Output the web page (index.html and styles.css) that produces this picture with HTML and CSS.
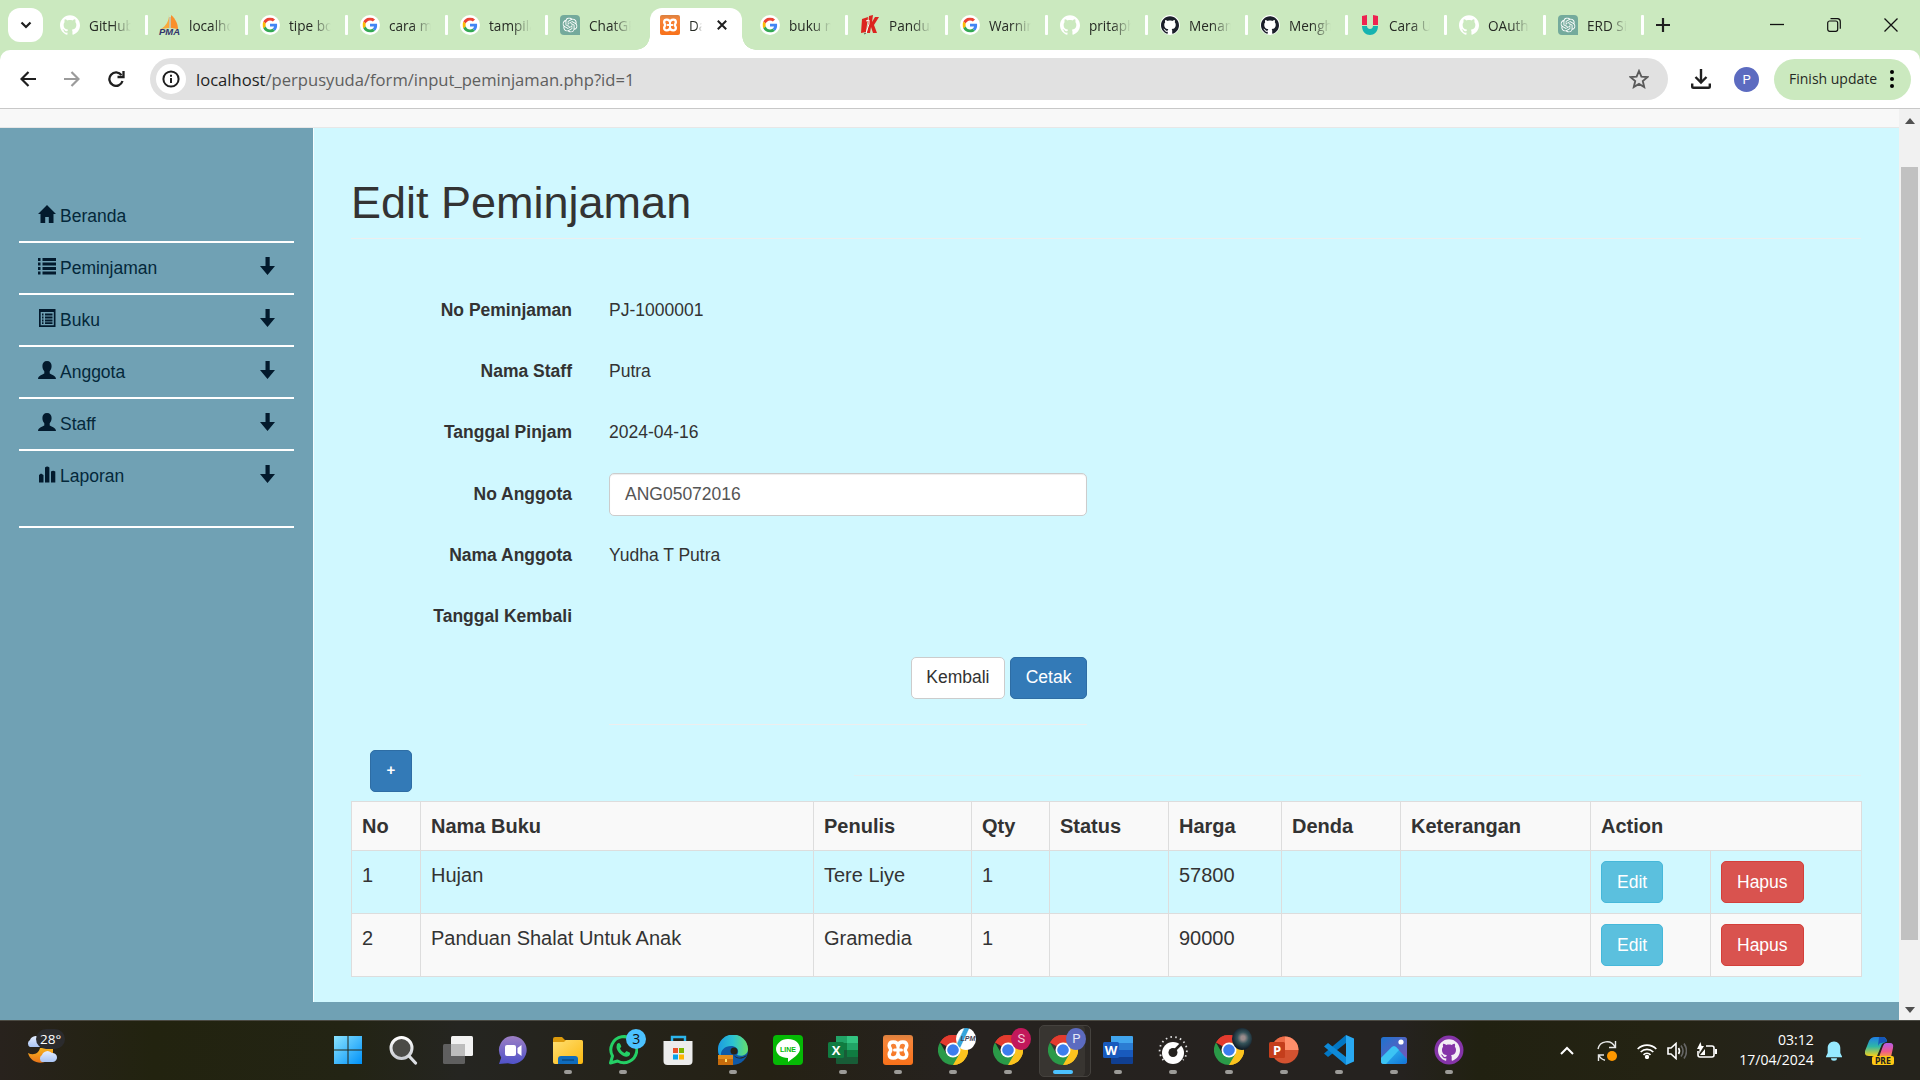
FILE: index.html
```html
<!DOCTYPE html>
<html lang="id">
<head>
<meta charset="utf-8">
<title>Data Peminjaman</title>
<link rel="stylesheet" href="styles.css">
</head>
<body>
<svg class="defs" width="0" height="0">
  <defs>
    <linearGradient id="gWin" x1="0" y1="0" x2="1" y2="1"><stop offset="0" stop-color="#8be4ff"/><stop offset="1" stop-color="#0091f8"/></linearGradient>
    <linearGradient id="gLens" x1="0" y1="0" x2="0" y2="1"><stop offset="0" stop-color="#fff"/><stop offset="1" stop-color="#c9ccd2"/></linearGradient>
    <linearGradient id="gChat" x1="0" y1="0" x2="0" y2="1"><stop offset="0" stop-color="#9d7fc4"/><stop offset="1" stop-color="#4f52c9"/></linearGradient>
    <linearGradient id="gFolder" x1="0" y1="0" x2="1" y2="1"><stop offset="0" stop-color="#ffdf72"/><stop offset="1" stop-color="#fbb80f"/></linearGradient>
    <linearGradient id="gEdge" x1="0" y1="0" x2="1" y2="0"><stop offset="0" stop-color="#1c9be0"/><stop offset=".5" stop-color="#2cc3d2"/><stop offset="1" stop-color="#66e06a"/></linearGradient>
    <linearGradient id="gXampp" x1="0" y1="0" x2="0" y2="1"><stop offset="0" stop-color="#d9803f"/><stop offset=".2" stop-color="#f6853a"/><stop offset="1" stop-color="#f8711a"/></linearGradient>
    <linearGradient id="gPhoto" x1="0" y1="0" x2="1" y2="1"><stop offset="0" stop-color="#1d73cf"/><stop offset="1" stop-color="#7d56b8"/></linearGradient>
    <linearGradient id="gHill" x1="0" y1="0" x2="1" y2="1"><stop offset="0" stop-color="#37c8f5"/><stop offset="1" stop-color="#1274d8"/></linearGradient>
    <linearGradient id="gCopA" x1="0" y1="0" x2="0" y2="1"><stop offset="0" stop-color="#1f7fe8"/><stop offset=".5" stop-color="#2fb7a5"/><stop offset="1" stop-color="#f3cf1d"/></linearGradient>
    <linearGradient id="gCopB" x1="0" y1="0" x2="0" y2="1"><stop offset="0" stop-color="#b55ce8"/><stop offset=".6" stop-color="#f0598b"/><stop offset="1" stop-color="#f9a13a"/></linearGradient>
    <linearGradient id="gCloud" x1="0" y1="0" x2="0" y2="1"><stop offset="0" stop-color="#e4edff"/><stop offset="1" stop-color="#a9c4f4"/></linearGradient>
    <linearGradient id="gMoon" x1="0" y1="0" x2="0" y2="1"><stop offset="0" stop-color="#f7b31e"/><stop offset="1" stop-color="#e8741a"/></linearGradient>
  </defs>
  <symbol id="github" viewBox="0 0 24 24"><path d="M12 .297c-6.63 0-12 5.373-12 12 0 5.303 3.438 9.8 8.205 11.385.6.113.82-.258.82-.577 0-.285-.01-1.04-.015-2.04-3.338.724-4.042-1.61-4.042-1.61C4.422 18.07 3.633 17.7 3.633 17.7c-1.087-.744.084-.729.084-.729 1.205.084 1.838 1.236 1.838 1.236 1.07 1.835 2.809 1.305 3.495.998.108-.776.417-1.305.76-1.605-2.665-.3-5.466-1.332-5.466-5.93 0-1.31.465-2.38 1.235-3.22-.135-.303-.54-1.523.105-3.176 0 0 1.005-.322 3.3 1.23.96-.267 1.98-.399 3-.405 1.02.006 2.04.138 3 .405 2.28-1.552 3.285-1.23 3.285-1.23.645 1.653.24 2.873.12 3.176.765.84 1.23 1.91 1.23 3.22 0 4.61-2.805 5.625-5.475 5.92.42.36.81 1.096.81 2.22 0 1.606-.015 2.896-.015 3.286 0 .315.21.69.825.57C20.565 22.092 24 17.592 24 12.297c0-6.627-5.373-12-12-12"/></symbol>
  <symbol id="githubdark" viewBox="0 0 20 20"><circle cx="10" cy="10" r="10" fill="#fff"/><svg x="1" y="1" width="18" height="18"><use href="#github" fill="#1b1f2a"/></svg></symbol>
  <symbol id="google" viewBox="0 0 20 20"><circle cx="10" cy="10" r="10" fill="#fff"/><svg x="2.5" y="2.5" width="15" height="15" viewBox="0 0 48 48"><path fill="#EA4335" d="M24 9.5c3.54 0 6.71 1.22 9.21 3.6l6.85-6.85C35.9 2.38 30.47 0 24 0 14.62 0 6.51 5.38 2.56 13.22l7.98 6.19C12.43 13.72 17.74 9.5 24 9.5z"/><path fill="#4285F4" d="M46.98 24.55c0-1.57-.15-3.09-.38-4.55H24v9.02h12.94c-.58 2.96-2.26 5.48-4.78 7.18l7.73 6c4.51-4.18 7.09-10.36 7.09-17.65z"/><path fill="#FBBC05" d="M10.53 28.59c-.48-1.45-.76-2.99-.76-4.59s.27-3.14.76-4.59l-7.98-6.19C.92 16.46 0 20.12 0 24c0 3.88.92 7.54 2.56 10.78l7.97-6.19z"/><path fill="#34A853" d="M24 48c6.48 0 11.93-2.13 15.89-5.81l-7.73-6c-2.15 1.45-4.92 2.3-8.16 2.3-6.26 0-11.57-4.22-13.47-9.91l-7.98 6.19C6.51 42.62 14.62 48 24 48z"/></svg></symbol>
  <symbol id="openai" viewBox="0 0 20 20"><path fill="#74aa9c" d="M4 0h12a4 4 0 0 1 4 4v16H4a4 4 0 0 1-4-4V4a4 4 0 0 1 4-4z"/><svg x="2.5" y="2.5" width="15" height="15" viewBox="0 0 24 24"><path fill="#fff" d="M22.2819 9.8211a5.9847 5.9847 0 0 0-.5157-4.9108 6.0462 6.0462 0 0 0-6.5098-2.9A6.0651 6.0651 0 0 0 4.9807 4.1818a5.9847 5.9847 0 0 0-3.9977 2.9 6.0462 6.0462 0 0 0 .7427 7.0966 5.98 5.98 0 0 0 .511 4.9107 6.051 6.051 0 0 0 6.5146 2.9001A5.9847 5.9847 0 0 0 13.2599 24a6.0557 6.0557 0 0 0 5.7718-4.2058 5.9894 5.9894 0 0 0 3.9977-2.9001 6.0557 6.0557 0 0 0-.7475-7.0729zm-9.022 12.6081a4.4755 4.4755 0 0 1-2.8764-1.0408l.1419-.0804 4.7783-2.7582a.7948.7948 0 0 0 .3927-.6813v-6.7369l2.02 1.1686a.071.071 0 0 1 .038.052v5.5826a4.504 4.504 0 0 1-4.4945 4.4944zm-9.6607-4.1254a4.4708 4.4708 0 0 1-.5346-3.0137l.142.0852 4.783 2.7582a.7712.7712 0 0 0 .7806 0l5.8428-3.3685v2.3324a.0804.0804 0 0 1-.0332.0615L9.74 19.9502a4.4992 4.4992 0 0 1-6.1408-1.6464zM2.3408 7.8956a4.485 4.485 0 0 1 2.3655-1.9728V11.6a.7664.7664 0 0 0 .3879.6765l5.8144 3.3543-2.0201 1.1685a.0757.0757 0 0 1-.071 0l-4.8303-2.7865A4.504 4.504 0 0 1 2.3408 7.872zm16.5963 3.8558L13.1038 8.364 15.1192 7.2a.0757.0757 0 0 1 .071 0l4.8303 2.7913a4.4944 4.4944 0 0 1-.6765 8.1042v-5.6772a.79.79 0 0 0-.407-.667zm2.0107-3.0231l-.142-.0852-4.7735-2.7818a.7759.7759 0 0 0-.7854 0L9.409 9.2297V6.8974a.0662.0662 0 0 1 .0284-.0615l4.8303-2.7866a4.4992 4.4992 0 0 1 6.6802 4.66zM8.3065 12.863l-2.02-1.1638a.0804.0804 0 0 1-.038-.0567V6.0742a4.4992 4.4992 0 0 1 7.3757-3.4537l-.142.0805L8.704 5.459a.7948.7948 0 0 0-.3927.6813zm1.0976-2.3654l2.602-1.4998 2.6069 1.4998v2.9994l-2.5974 1.4997-2.6067-1.4997Z"/></svg></symbol>
  <symbol id="xampp" viewBox="0 0 30 30"><rect width="30" height="30" rx="3" fill="url(#gXampp)"/><path d="M15 10.500C14 6 6.500 5.500 6.200 10.500c0 2.300 1.600 3 1.600 4.500s-1.600 2.200-1.600 4.500C6.500 24.500 14 24 15 19.500c1 4.500 8.500 5 8.800 0 0-2.300-1.600-3-1.600-4.500s1.600-2.200 1.600-4.500C23.500 5.500 16 6 15 10.500z" fill="none" stroke="#fff" stroke-width="3.500" stroke-linejoin="round"/><path d="M11.500 15h7M15 10v10" stroke="#fff" stroke-width="3" stroke-linecap="round"/></symbol>
  <symbol id="chrome" viewBox="0 0 48 48"><path fill="#e33b2e" d="M24 24L3.200 12A24 24 0 0 1 44.800 12z"/><path fill="#fcc31e" d="M24 24V48A24 24 0 0 0 44.800 12H24z"/><path fill="#fcc31e" d="M44.800 12A24 24 0 0 1 24 48L34.400 30z"/><path fill="#2a9a48" d="M3.200 12A24 24 0 0 0 24 48L34.400 30 24 24 13.600 30z"/><path fill="#e33b2e" d="M3.200 12A24 24 0 0 1 44.800 12H24z"/><circle cx="24" cy="24" r="12" fill="#fff"/><circle cx="24" cy="24" r="9.300" fill="#3c7ded"/></symbol>
  <symbol id="arrow" viewBox="0 0 15 18"><path d="M5.500 0h4.200v9H15l-7.500 9L0 9h5.500z"/></symbol>
  <symbol id="person" viewBox="0 0 18 18"><path d="M9 0c3 0 4.600 2 4.600 5 0 2.500-1 4.200-1.900 5.200v2.200c1 .9 6.300 1.800 6.300 5.600H0c0-3.800 5.300-4.700 6.300-5.600v-2.200C5.400 9.200 4.400 7.500 4.400 5 4.400 2 6 0 9 0z"/></symbol>
</svg>

<header class="tabstrip">
  <button class="tabsearch"><svg width="12" height="8" viewBox="0 0 12 8"><path d="M1.500 1.500L6 6l4.500-4.500" fill="none" stroke="#1f1f1f" stroke-width="2.200"/></svg></button>
  <div class="tab"><svg class="fav" fill="#fff"><use href="#github"/></svg><span>GitHub</span></div>
  <div class="tab"><svg class="fav" viewBox="0 0 20 20"><path d="M9 0C9 6 6 11 1 14l8-1z" fill="#f9a93c"/><path d="M11 0c5 4 7 10 7 14l-7-1z" fill="#f98f2c"/><path d="M10 2v11" stroke="#c98" /><text x="-1" y="20" textLength="21" lengthAdjust="spacingAndGlyphs" class="pma">PMA</text></svg><span>localhost</span></div>
  <div class="tab"><svg class="fav"><use href="#google"/></svg><span>tipe boot</span></div>
  <div class="tab"><svg class="fav"><use href="#google"/></svg><span>cara me</span></div>
  <div class="tab"><svg class="fav"><use href="#google"/></svg><span>tampilan</span></div>
  <div class="tab last"><svg class="fav"><use href="#openai"/></svg><span>ChatGP</span></div>
  <div class="tab active"><svg class="fav"><use href="#xampp"/></svg><span>Dat</span><svg class="x" width="10" height="10" viewBox="0 0 10 10"><path d="M.8.800l8.400 8.400M9.200.800L.8 9.200" stroke="#1f1f1f" stroke-width="2"/></svg></div>
  <div class="tab"><svg class="fav"><use href="#google"/></svg><span>buku nik</span></div>
  <div class="tab"><svg class="fav" viewBox="0 0 20 20"><path d="M2 4l6-2-2 15-5 1zM9 1l4-1-1 7 3-5h4l-5 8 3 8h-4l-2-6-1 6H7z" fill="#dc241f"/><path d="M6 6l3-1v4l-3 9" stroke="#fff" fill="none"/><path d="M4 19l2-1" stroke="#555"/></svg><span>Panduan</span></div>
  <div class="tab"><svg class="fav"><use href="#google"/></svg><span>Warning</span></div>
  <div class="tab"><svg class="fav" fill="#fff"><use href="#github"/></svg><span>pritaphp</span></div>
  <div class="tab"><svg class="fav"><use href="#githubdark"/></svg><span>Menam</span></div>
  <div class="tab"><svg class="fav"><use href="#githubdark"/></svg><span>Mengh</span></div>
  <div class="tab narrow"><svg class="fav" viewBox="0 0 20 20"><path d="M2 1l5-1v10H2zM13 0l5 1v9h-5z" fill="#ee2350"/><path d="M2 11h5c0 4 6 4 6 0h5c0 12-16 12-16 0z" fill="#16b3b0"/></svg><span>Cara Up</span></div>
  <div class="tab narrow"><svg class="fav" fill="#fff"><use href="#github"/></svg><span>OAuth2</span></div>
  <div class="tab narrower"><svg class="fav"><use href="#openai"/></svg><span>ERD Sis</span></div>
  <svg class="plus" width="14" height="14" viewBox="0 0 14 14"><path d="M7 0v14M0 7h14" stroke="#1f1f1f" stroke-width="2.200"/></svg>
  <div class="wincontrols">
    <svg width="14" height="14" viewBox="0 0 14 14"><path d="M0 6.500h14" stroke="#111" stroke-width="1.300"/></svg>
    <svg width="14" height="14" viewBox="0 0 14 14" fill="none" stroke="#111" stroke-width="1.200"><rect x=".7" y="3" width="10" height="10.300" rx="2"/><path d="M3.500.7h7a3 3 0 0 1 2.800 3v7"/></svg>
    <svg width="14" height="14" viewBox="0 0 14 14"><path d="M.5.500l13 13M13.500.500l-13 13" stroke="#111" stroke-width="1.300"/></svg>
  </div>
</header>

<div class="toolbarwrap">
<div class="toolbar">
  <div class="nav">
    <svg width="16" height="16" viewBox="0 0 16 16" fill="none" stroke="#1f1f1f" stroke-width="2.200"><path d="M16 8H2M8.500 1L1.500 8l7 7"/></svg>
    <svg width="16" height="16" viewBox="0 0 16 16" fill="none" stroke="#9b9b9b" stroke-width="2.200"><path d="M0 8h14M7.500 1l7 7-7 7"/></svg>
    <svg width="17" height="16" viewBox="0 0 17 16" fill="none" stroke="#1f1f1f" stroke-width="2.300"><path d="M14.500 10A6.700 6.700 0 1 1 13.500 4.200"/><path d="M15.500 0v6h-6" /></svg>
  </div>
  <div class="omnibox">
    <span class="info"><svg width="18" height="18" viewBox="0 0 18 18"><circle cx="9" cy="9" r="7.600" fill="none" stroke="#1f1f1f" stroke-width="2"/><path d="M9 8v5M9 4.700v2" stroke="#1f1f1f" stroke-width="2"/></svg></span>
    <span class="url"><b>localhost</b>/perpusyuda/form/input_peminjaman.php?id=1</span>
    <svg width="20" height="20" viewBox="0 0 20 20"><path d="M10 2l2.400 5.600 6 .5-4.600 4 1.400 5.900L10 14.900 4.800 18l1.400-5.900-4.600-4 6-.5z" fill="none" stroke="#5a5a5a" stroke-width="1.900"/></svg>
  </div>
  <svg class="dl" width="20" height="20" viewBox="0 0 20 20" fill="none" stroke="#1f1f1f" stroke-width="2.400"><path d="M10 0v13M4.500 8l5.500 5.500L15.500 8M1.200 14.500V17.500a1.300 1.300 0 0 0 1.300 1.300h15a1.300 1.300 0 0 0 1.300-1.300v-3"/></svg>
  <span class="avatar">P</span>
  <button class="update"><span>Finish update</span><svg width="4" height="18" viewBox="0 0 4 18"><circle cx="2" cy="2" r="2"/><circle cx="2" cy="9" r="2"/><circle cx="2" cy="16" r="2"/></svg></button>
</div>
</div>

<div class="viewport">
  <div class="page">
    <div class="navbar"></div>
    <div class="columns">
      <aside class="sidebar">
        <ul>
          <li><svg class="gi" viewBox="0 0 18 18"><path d="M9 0l9 9h-2.500v9h-4.700v-6H7.200v6H2.500V9H0z"/></svg>Beranda</li>
          <li><svg class="gi" viewBox="0 0 18 18"><path d="M0 1h2.500v3H0zM4.500 1H18v3H4.500zM0 5.500h2.500v3H0zM4.500 5.500H18v3H4.500zM0 10h2.500v3H0zM4.500 10H18v3H4.500zM0 14.500h2.500v3H0zM4.500 14.500H18v3H4.500z"/></svg>Peminjaman<svg class="down"><use href="#arrow"/></svg></li>
          <li><svg class="gi" viewBox="0 0 18 18"><path fill-rule="evenodd" d="M1 0h16.500v18H1zM2.700 3v13.300h13.100V3z"/><path d="M4 4.500h1.500v2H4zM7 4.500h7.500v2H7zM4 7.500h1.500v2H4zM7 7.500h7.500v2H7zM4 10.500h1.500v2H4zM7 10.500h7.500v2H7zM4 13.300h1.500v1.800H4zM7 13.300h7.500v1.800H7z"/></svg>Buku<svg class="down"><use href="#arrow"/></svg></li>
          <li><svg class="gi"><use href="#person"/></svg>Anggota<svg class="down"><use href="#arrow"/></svg></li>
          <li><svg class="gi"><use href="#person"/></svg>Staff<svg class="down"><use href="#arrow"/></svg></li>
          <li><svg class="gi" viewBox="0 0 18 18"><path d="M1 10l2-1.500 2.500 1.500v7.500H1zM7 2.500Q9.200.500 11.400 2.500v15H7zM13 6.500q2-1.500 4.300 0v11H13z"/></svg>Laporan<svg class="down"><use href="#arrow"/></svg></li>
        </ul>
      </aside>
      <main class="content">
        <h1>Edit Peminjaman</h1>
        <form class="form">
          <label>No Peminjaman</label><p>PJ-1000001</p>
          <label>Nama Staff</label><p>Putra</p>
          <label>Tanggal Pinjam</label><p>2024-04-16</p>
          <label>No Anggota</label><div class="input">ANG05072016</div>
          <label>Nama Anggota</label><p>Yudha T Putra</p>
          <label>Tanggal Kembali</label><p></p>
          <div class="actions"><span class="btn default">Kembali</span><span class="btn primary">Cetak</span></div>
        </form>
        <div class="addrow"><span class="btn primary add">+</span><i></i></div>
        <table>
          <colgroup><col class="c1"><col class="c2"><col class="c3"><col class="c4"><col class="c5"><col class="c6"><col class="c7"><col class="c8"><col class="c9"><col class="c10"></colgroup>
          <tr class="odd head"><th>No</th><th>Nama Buku</th><th>Penulis</th><th>Qty</th><th>Status</th><th>Harga</th><th>Denda</th><th>Keterangan</th><th colspan="2">Action</th></tr>
          <tr><td>1</td><td>Hujan</td><td>Tere Liye</td><td>1</td><td></td><td>57800</td><td></td><td></td><td><span class="btn infob">Edit</span></td><td><span class="btn danger">Hapus</span></td></tr>
          <tr class="odd"><td>2</td><td>Panduan Shalat Untuk Anak</td><td>Gramedia</td><td>1</td><td></td><td>90000</td><td></td><td></td><td><span class="btn infob">Edit</span></td><td><span class="btn danger">Hapus</span></td></tr>
        </table>
      </main>
    </div>
  </div>
  <div class="scrollbar">
    <svg width="10" height="6" viewBox="0 0 10 6"><path d="M5 0l5 6H0z" fill="#505050"/></svg>
    <div class="thumb"></div>
    <svg class="bot" width="10" height="6" viewBox="0 0 10 6"><path d="M5 6l5-6H0z" fill="#505050"/></svg>
  </div>
</div>

<footer class="taskbar">
  <div class="weather">
    <svg width="32" height="30" viewBox="0 0 32 30"><path d="M4 12a4 4 0 0 1 0-7 6 6 0 0 1 10-2v9z" fill="url(#gCloud)"/><path d="M2 18c6 3 11 0 12-5h13v7c-6 11-22 10-25-2z" fill="url(#gMoon)"/><path d="M16 27a4 4 0 0 1 0-7 6 6 0 0 1 10-2 4 4 0 0 1 1 9z" fill="url(#gCloud)"/></svg>
    <span>28°</span>
  </div>
  <div class="apps">
    <div class="app"><svg viewBox="0 0 30 30"><path fill="url(#gWin)" d="M1 1h13.500v13.500H1zM15.500 1H29v13.500H15.500zM1 15.500h13.500V29H1zM15.500 15.500H29V29H15.500z"/></svg></div>
    <div class="app"><svg viewBox="0 0 30 30"><circle cx="13.500" cy="13" r="10.500" fill="#4b4b47" stroke="url(#gLens)" stroke-width="3"/><path d="M21 21l6.500 7" stroke="#dcdfe3" stroke-width="3.200" stroke-linecap="round"/></svg></div>
    <div class="app"><svg viewBox="0 0 30 30"><rect y="9" width="22" height="20" rx="1.500" fill="#5f5f5f"/><rect x="8" y="1" width="22" height="20" rx="1.500" fill="#f2f2f2"/><path d="M8 9h14v12H8z" fill="#bdbdbd"/></svg></div>
    <div class="app"><svg viewBox="0 0 30 30"><path d="M15 1a14 14 0 1 1-5 27.200L1 29l2.200-6.500A14 14 0 0 1 15 1z" fill="url(#gChat)"/><rect x="7" y="10" width="11" height="11" rx="2" fill="#fff"/><path d="M19.500 13l4-3v11l-4-3z" fill="#fff"/></svg></div>
    <div class="app run"><svg viewBox="0 0 30 30"><path d="M0 4q0-2 2-2h7l3 3h16q2 0 2 3H0z" fill="#dc9a0c"/><path d="M0 7h11l2-2h15q2 0 2 2v20q0 2-2 2H2q-2 0-2-2z" fill="url(#gFolder)"/><path d="M5 29v-5q0-3 3-3h14q3 0 3 3v5z" fill="#0f6cbd"/><path d="M9 25h12" stroke="#0a4a85" stroke-width="1.500"/></svg></div>
    <div class="app run"><svg viewBox="0 0 30 30"><path d="M2.500 28l2-7A13 13 0 1 1 9.500 26z" fill="none" stroke="#24cf65" stroke-width="3" stroke-linejoin="round"/><path d="M9 9c2-2 3-1 3.500.500l.8 2-1.300 2c1 2 2.500 3.500 4.700 4.500l1.800-2 3.500 1.700c.5 3-2 4-4 4C12.500 21 8.500 15 8.500 12z" fill="#24cf65"/></svg><span class="badge">3</span></div>
    <div class="app"><svg viewBox="0 0 30 30"><path d="M9 8V2h13v6" fill="none" stroke="#2cb5ec" stroke-width="2.400"/><path d="M.500 6h29v20q0 4-4 4h-21q-4 0-4-4z" fill="#ececec"/><path fill="#e8502a" d="M10 13h5v5h-5z"/><path fill="#7db602" d="M16 13h5v5h-5z"/><path fill="#06a2ea" d="M10 19.500h5v5h-5z"/><path fill="#fcb504" d="M16 19.500h5v5h-5z"/></svg></div>
    <div class="app run"><svg viewBox="0 0 30 30"><circle cx="15" cy="15" r="15" fill="#0f5aa8"/><path d="M0 15A15 15 0 0 1 30 14c0 6-6 8-11 6 3-4 0-9-6-9-7 0-11 5-10 11-2-2-3-4-3-7z" fill="url(#gEdge)"/><path d="M15 19q5 7 14 1-2 3-4 3-7 2-10-4z" fill="#262218"/><circle cx="16" cy="16" r="3.500" fill="#262218"/><path d="M0 20h15v10H0z" fill="#c66b0c"/><path d="M0 20h15v4H0z" fill="#e28b1c"/><path d="M7 24h2v3H7z" fill="#ffdc6a"/></svg></div>
    <div class="app"><svg viewBox="0 0 30 30"><rect width="30" height="30" rx="4" fill="#05b905"/><path d="M15 4c7 0 12 4 12 10 0 5-7 9-12 13v-4C8 23 3 19 3 14S8 4 15 4z" fill="#fff"/><text x="7" y="16.500" class="line" textLength="16" lengthAdjust="spacingAndGlyphs">LINE</text></svg></div>
    <div class="app run"><svg viewBox="0 0 30 30"><path d="M8 1h11v7H8z" fill="#21a366"/><path d="M19 1h10q1 0 1 1v6H19z" fill="#33c481"/><path d="M8 8h11v7H8z" fill="#107c41"/><path d="M19 8h11v7H19z" fill="#21a366"/><path d="M8 15h11v7H8z" fill="#185c37"/><path d="M19 15h11v7H19z" fill="#107c41"/><path d="M8 22h22v6q0 1-1 1H9q-1 0-1-1z" fill="#185c37"/><rect y="7" width="16" height="16" rx="1.500" fill="#107c41"/><text x="8" y="19.500" class="ms">X</text></svg></div>
    <div class="app run"><svg><use href="#xampp"/></svg></div>
    <div class="app run"><svg><use href="#chrome"/></svg><span class="badge photo"><em>LPM</em></span></div>
    <div class="app run"><svg><use href="#chrome"/></svg><span class="badge pink">S</span></div>
    <div class="app run current"><svg><use href="#chrome"/></svg><span class="badge indigo">P</span></div>
    <div class="app run"><svg viewBox="0 0 30 30"><path d="M8 1h21q1 0 1 1v6H8z" fill="#41a5ee"/><path d="M8 8h22v7H8z" fill="#2b7cd3"/><path d="M8 15h22v7H8z" fill="#185abd"/><path d="M8 22h22v6q0 1-1 1H9q-1 0-1-1z" fill="#103f91"/><rect y="7" width="16" height="16" rx="1.500" fill="#185abd"/><text x="8" y="19.500" class="ms">W</text></svg></div>
    <div class="app run"><svg viewBox="0 0 30 30"><path d="M5.500 25A13.600 13.600 0 1 1 25 25" fill="none" stroke="#ddd" stroke-width="1.800" stroke-dasharray="1.600 3.200"/><circle cx="15" cy="18" r="11" fill="#fff"/><circle cx="15" cy="17.500" r="4.500" fill="#24221f"/><path d="M15 17l8-8" stroke="#24221f" stroke-width="2.500"/></svg></div>
    <div class="app run"><svg><use href="#chrome"/></svg><span class="badge dark"></span></div>
    <div class="app run"><svg viewBox="0 0 30 30"><circle cx="16" cy="15" r="13.500" fill="#d35230"/><path d="M16 1.500A13.500 13.500 0 0 1 29.500 15H16z" fill="#ff8f6b"/><path d="M16 1.500A13.500 13.500 0 0 0 2.500 15H16z" fill="#ed6c47"/><rect y="7" width="16" height="16" rx="1.500" fill="#c43e1c"/><text x="8" y="19.500" class="ms">P</text></svg></div>
    <div class="app run"><svg viewBox="0 0 30 30"><path d="M22 0l8 3.500v23L22 30z" fill="#29a9f2"/><path d="M22 0v8L4 22l-4-3.500z" fill="#0277c4"/><path d="M22 30v-8L4 8 0 11.500z" fill="#0e8ad8"/></svg></div>
    <div class="app run"><svg viewBox="0 0 30 30"><rect x="2" y="2" width="26" height="27" rx="2.500" fill="url(#gPhoto)"/><path d="M2 23L13 12q2-1.500 4 0l11 12v2q0 3-3 3H5q-3 0-3-3z" fill="url(#gHill)"/><path d="M2 23L13 12q2-1.500 4 0l3 3L7 29H5q-3 0-3-3z" fill="#3cc4f4"/><circle cx="22" cy="7" r="2.600" fill="#fff"/></svg></div>
    <div class="app run"><svg viewBox="0 0 30 30"><circle cx="15" cy="15" r="14.500" fill="#8534a8"/><svg x="4" y="4" width="22" height="22"><use href="#github" fill="#f3eef5"/></svg></svg></div>
  </div>
  <div class="tray">
    <svg class="chev" width="14" height="9" viewBox="0 0 14 9"><path d="M1 8l6-6 6 6" fill="none" stroke="#fff" stroke-width="2"/></svg>
    <svg class="sync" width="20" height="20" viewBox="0 0 20 20" fill="none" stroke="#e8e8e8" stroke-width="1.400"><path d="M1 8a9 9 0 0 1 17-2M18.500 0v6.500H12M8 19.300a9 9 0 0 1-6-5M1.500 20v-6H7"/><circle cx="15" cy="15" r="5" fill="#ff9800" stroke="none"/></svg>
    <svg class="wifi" width="20" height="16" viewBox="0 0 20 16" fill="none" stroke="#fff" stroke-width="1.700"><path d="M.7 6a13 13 0 0 1 18.600 0M3.700 9a9 9 0 0 1 12.600 0M6.500 11.800a5 5 0 0 1 7 0"/><circle cx="10" cy="14" r="1.300" fill="#fff"/></svg>
    <svg class="vol" width="20" height="18" viewBox="0 0 20 18" fill="none" stroke="#fff" stroke-width="1.600"><path d="M1 6h3l5-4.500v15L4 12H1z"/><path d="M11.500 6q2 3 0 6"/><path d="M14 3.500q4 5.500 0 11M17 1.500q5 7.500 0 15" stroke="#666"/></svg>
    <svg class="bat" width="20" height="18" viewBox="0 0 20 18"><path d="M9 4h6q2 0 2 2v7q0 2-2 2H3q-2 0-2-2V9" fill="none" stroke="#fff" stroke-width="1.600"/><path d="M18 7h2v5h-2zM3.500 0L0 7h2.500L2 12l5-8H4.500zM3 13l5-6v6z" fill="#fff"/></svg>
    <div class="clock"><span>03:12</span><span>17/04/2024</span></div>
    <svg class="bell" width="16" height="20" viewBox="0 0 16 20"><path d="M8 .500c4 0 6.300 3 6.300 6.500v5L16 15.500v.8H0v-.8L1.700 12V7C1.700 3.500 4 .500 8 .500zM5 17.300h6a3 2.500 0 0 1-6 0z" fill="#97e9ff"/></svg>
    <svg width="30" height="30" viewBox="0 0 30 30"><path d="M10 1h8q3 0 4 4l-5 3-5 12H4q-5 0-4-5L4 5q2-4 6-4z" fill="url(#gCopA)"/><path d="M18 1q3 0 4 5l-6 1q-2 0-3 3L14 1z" fill="#1556b8"/><path d="M21 7h4q4 0 3 5l-2 9H14l4-11q1-3 3-3z" fill="url(#gCopB)"/><rect x="7" y="20" width="22" height="9" rx="2" fill="#ffc814"/><text x="10" y="27.500" textLength="16" lengthAdjust="spacingAndGlyphs" class="pre">PRE</text></svg>
  </div>
</footer>
</body>
</html>
```
FILE: styles.css
```css
* { box-sizing: border-box; }
body {
  margin: 0; width: 1920px; height: 1080px; overflow: hidden;
  display: grid; grid-template-rows: 50px 59px 911px 60px;
  font-family: "Liberation Sans", Arial, sans-serif; color: #333;
}
.defs { position: absolute; }
svg { display: block; flex: none; }
button { border: 0; padding: 0; font: inherit; }

/* Tab strip */
.tabstrip {
  background: #cbe9bf; display: flex; align-items: center; padding-left: 8px;
  font: 13.6px/20px "Open Sans", "Noto Sans", sans-serif; color: #262a24;
}
.tabsearch { width: 35px; height: 34px; border-radius: 12px; background: #fff; display: grid; place-items: center; margin-right: 5px; }
.tab { width: 100px; height: 50px; padding-left: 12px; display: flex; align-items: center; flex: none; }
.tab.narrow { width: 99px; }
.tab.narrower { width: 98px; }
.tab span {
  width: 42px; margin-left: 9px; margin-right: 1px; padding-top: 1px; overflow: hidden; white-space: nowrap;
  -webkit-mask-image: linear-gradient(90deg, #000 55%, transparent);
  mask-image: linear-gradient(90deg, #000 55%, transparent);
}
.tab:not(.active):not(.last)::after { content: ""; width: 3px; height: 20px; background: #fff; border-radius: 1px; margin-left: 13px; }
.fav { width: 20px; height: 20px; overflow: visible; }
.pma { font: italic bold 9px "Liberation Sans", sans-serif; fill: #32346b; }
.tab.active { position: relative; z-index: 1; width: 92px; margin: 0 6px 0 2px; padding: 0 0 8px 10px; height: 42px; align-self: flex-end; background: #fff; border-radius: 12px 12px 0 0; }
.tab.active span { width: 13px; }
.tab.active .x { margin-left: 14px; }
.tab.active::before, .tab.active::after { content: ""; position: absolute; bottom: 0; width: 14px; height: 14px; }
.tab.active::before { left: -14px; background: radial-gradient(circle at 0 0, transparent 13.5px, #fff 14px); }
.tab.active::after { right: -14px; background: radial-gradient(circle at 100% 0, transparent 13.5px, #fff 14px); }
.plus { margin-left: 12px; }
.wincontrols { margin-left: auto; display: flex; gap: 43px; padding-right: 22px; }

/* Toolbar */
.toolbarwrap { background: #cbe9bf; }
.toolbar {
  height: 59px; background: #fff; border-radius: 10px 10px 0 0; border-bottom: 1px solid #c8c8c8;
  display: flex; align-items: center; font-family: "Open Sans", "Noto Sans", sans-serif;
}
.nav { display: flex; align-items: center; gap: 28px; padding-left: 20px; width: 150px; }
.omnibox { width: 1518px; height: 42px; border-radius: 21px; background: #e1e1e1; display: flex; align-items: center; padding: 0 19px 0 6px; }
.info { width: 30px; height: 30px; border-radius: 50%; background: #fff; display: grid; place-items: center; }
.url { margin-left: 10px; flex: 1; font-size: 16.600px; color: #5e5e5e; white-space: nowrap; }
.url b { font-weight: 400; color: #1f1f1f; }
.dl { margin-left: 23px; }
.avatar { width: 25px; height: 25px; margin: 0 15px 0 23px; border-radius: 50%; background: #5c6bc0; color: #fff; font: 13px/25px Roboto, sans-serif; text-align: center; }
.update { width: 137px; height: 41px; border-radius: 21px; background: #cbe9bf; display: flex; align-items: center; justify-content: space-between; padding: 0 17px 0 15px; font-size: 14px; color: #262a24; white-space: nowrap; }
.update span { margin-top: -2px; }

/* Page */
.viewport { display: grid; grid-template-columns: 1899px 21px; }
.page { background: #70a1b4; display: flex; flex-direction: column; }
.navbar { height: 19px; background: #f8f8f8; border-bottom: 1px solid #e7e7e7; }
.columns { display: grid; grid-template-columns: 313px 1586px; height: 874px; }
.sidebar { padding: 61px 19px 0; font-size: 17.500px; color: #04283a; }
.sidebar ul { list-style: none; margin: 0; padding: 0 0 23px; border-bottom: 2px solid #fff; }
.sidebar li { height: 52px; display: flex; align-items: center; padding: 0 19px; border-bottom: 2px solid #fff; }
.sidebar li:first-child { height: 54px; padding-top: 2px; }
.sidebar li:last-child { border: 0; padding-bottom: 2px; }
.gi { width: 18px; height: 18px; margin: -4px 4px 0 0; fill: #031a2d; }
.down { width: 15px; height: 18px; margin: -5px 0 0 auto; fill: #031a2d; }

.content { background: #d0f8ff; border-left: 1px solid #f4fdff; padding: 50px 38px 0 37px; }
h1 { margin: 0; height: 61px; border-bottom: 1px solid #eee; font-size: 45px; line-height: 50px; font-weight: 400; }
.form { display: grid; grid-template-columns: 221px 478px; grid-template-rows: repeat(6, 43.2px); row-gap: 18px; column-gap: 37px; padding-top: 50px; font-size: 17.500px; line-height: 25px; }
.form label { font-weight: 700; text-align: right; padding-top: 9px; }
.form p { margin: 0; padding-top: 9px; }
.input { height: 43px; background: #fff; border: 1px solid #ccc; border-radius: 5px; box-shadow: inset 0 1px 1px rgba(0,0,0,.075); padding: 8px 15px; color: #555; }
.actions { grid-column: 2; height: 68px; margin-top: 1px; display: flex; justify-content: flex-end; align-items: flex-start; gap: 5px; border-bottom: 1px solid #eee; }
.btn { display: block; width: max-content; height: 42px; padding: 0 15px; border: 1px solid; border-radius: 5px; font-size: 17.500px; line-height: 38px; color: #fff; }
.actions .btn { padding: 0 14.600px; }
.default { color: #333; background: #fff; border-color: #ccc; }
.primary { background: #337ab7; border-color: #2e6da4; }
.infob { background: #5bc0de; border-color: #46b8da; }
.danger { background: #d9534f; border-color: #d43f3a; }
.addrow { display: flex; margin-top: 25px; padding-left: 19px; height: 51px; }
.btn.add { width: 42px; padding: 0; text-align: center; font-size: 15px; font-weight: 700; }
.addrow i { margin: 25px 0 0 442px; flex: 1; height: 1px; background: #e2eff2; }
table { width: 1511px; border-collapse: collapse; table-layout: fixed; font-size: 20px; line-height: 28px; }
.c1 { width: 69px; } .c2 { width: 393px; } .c3 { width: 158px; } .c4 { width: 78px; } .c5 { width: 119px; }
.c6 { width: 113px; } .c7 { width: 119px; } .c8 { width: 190px; } .c9 { width: 120px; } .c10 { width: 151px; }
tr { height: 63px; }
tr.head { height: 49px; }
.odd { background: #f9f9f9; }
th, td { border: 1px solid #ddd; padding: 10px 10px 0; text-align: left; vertical-align: top; }
td .btn { margin-bottom: 9px; line-height: 40px; }

.scrollbar { background: #f1f1f1; display: flex; flex-direction: column; align-items: center; padding-top: 9px; }
.thumb { width: 17px; height: 773px; background: #c1c1c1; margin-top: 43px; }
.bot { margin: auto 0 7px; }

/* Taskbar */
.taskbar {
  display: flex; border-top: 1px solid #4b4a43; color: #fff; position: relative;
  font: 14.600px/20px "Open Sans", "Noto Sans", sans-serif;
  background: linear-gradient(90deg, #28221d 0, #22230f 8%, #232414 18%, #252521 24%, #252114 40%, #26221f 50%, #25221f 73%, #212111 77%, #242313 86%, #25231d 95%, #25231c);
}
.weather { width: 320px; padding: 11px 0 0 26px; display: flex; }
.weather svg { margin-top: 3px; }
.weather span { height: 20px; margin: -3px 0 0 -22px; padding: 0 4px; border-radius: 10px; background: #2b2b2d; font-size: 13.500px; }
.apps { display: grid; grid-template-columns: repeat(21, 55.04px); }
.app { position: relative; display: grid; justify-content: center; padding: 14px 0 0 1px; }
.app > svg { width: 30px; height: 30px; z-index: 1; }
.run::after { content: ""; position: absolute; left: 24px; top: 49px; width: 8px; height: 4px; border-radius: 2px; background: #9c9b98; }
.current::after { left: 18px; width: 20px; background: #4cc2ff; z-index: 1; }
.current::before { content: ""; position: absolute; left: 4px; top: 4px; width: 50px; height: 50px; border-radius: 5px; background: #383531; border: 1px solid #45423e; box-shadow: inset -6px 0 0 -1px #2c2926; }
.badge { position: absolute; z-index: 2; left: 31px; top: 8px; width: 20px; height: 20px; border-radius: 50%; background: #4cc2ff; color: #111; font-size: 14px; line-height: 20px; text-align: center; }
.pink, .indigo, .photo, .dark { top: 7px; height: 22px; }
.pink { background: #c2185b; color: #f3cddc; font: 13px/22px Roboto, sans-serif; }
.indigo { background: #5c6bc0; color: #e4e7f6; font: 13px/22px Roboto, sans-serif; }
.photo { background: linear-gradient(115deg, #fff 25%, #35a5dc 30%, #35a5dc 42%, #fff 46%); }
.photo em { display: block; font: italic bold 7px/22px "Liberation Sans", sans-serif; padding-left: 3px; color: #445; }
.dark { background: radial-gradient(circle at 55% 45%, #9a8c8c 0 12%, #35535a 35%, #101c28 70%); }
.line { font: bold 7px "Liberation Sans", sans-serif; fill: #05b905; }
.ms { font: bold 13px "Open Sans", sans-serif; fill: #fff; text-anchor: middle; }
.tray { flex: 1; display: flex; align-items: center; padding-left: 84px; }
.sync { margin-left: 23px; }
.wifi { margin-left: 20px; }
.vol { margin-left: 10px; }
.bat { margin-left: 10px; }
.clock { width: 97px; display: flex; flex-direction: column; align-items: flex-end; font-size: 14px; margin-top: -2px; }
.bell { margin: 0 23px 0 12px; }
.pre { font: bold 8.500px "DejaVu Sans", sans-serif; fill: #222; }
```
